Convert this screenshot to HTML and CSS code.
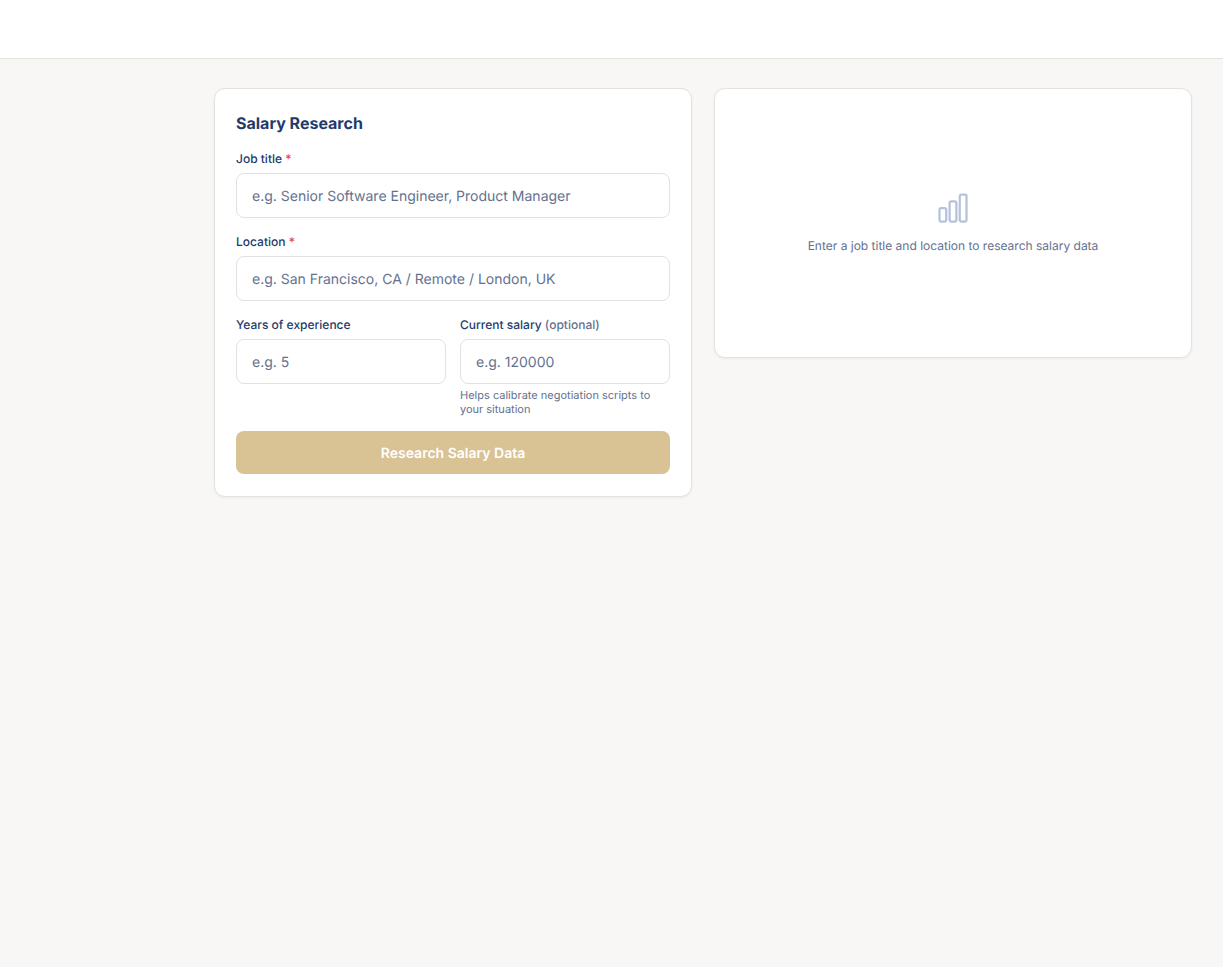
FILE: index.html
```html
<!DOCTYPE html>
<html lang="en">
<head>
    <meta charset="UTF-8">
    <meta name="viewport" content="width=device-width, initial-scale=1.0">
    <title>Salary Research</title>
    <link rel="stylesheet" href="styles.css">
</head>
<body>
    <header class="topbar"></header>
    <main class="content">
        <form class="card research-form">
            <h2>Salary Research</h2>
            <div class="field">
                <label for="job-title">Job title <span class="required">*</span></label>
                <input type="text" id="job-title" placeholder="e.g. Senior Software Engineer, Product Manager">
            </div>
            <div class="field">
                <label for="location">Location <span class="required">*</span></label>
                <input type="text" id="location" placeholder="e.g. San Francisco, CA / Remote / London, UK">
            </div>
            <div class="field-row">
                <div class="field">
                    <label for="experience">Years of experience</label>
                    <input type="number" id="experience" placeholder="e.g. 5" min="0">
                </div>
                <div class="field">
                    <label for="salary">Current salary <span class="optional">(optional)</span></label>
                    <input type="number" id="salary" placeholder="e.g. 120000" min="0">
                    <p class="hint">Helps calibrate negotiation scripts to your situation</p>
                </div>
            </div>
            <button type="submit" class="btn" disabled>Research Salary Data</button>
        </form>
        <section class="card empty">
            <svg class="empty-icon" viewBox="0 0 24 24" fill="none" stroke="currentColor" stroke-width="1.5" stroke-linecap="round" stroke-linejoin="round" aria-hidden="true">
                <path d="M3 13.125C3 12.504 3.504 12 4.125 12h2.25c.621 0 1.125.504 1.125 1.125v6.75C7.5 20.496 6.996 21 6.375 21h-2.25A1.125 1.125 0 013 19.875v-6.75zM9.75 8.625c0-.621.504-1.125 1.125-1.125h2.25c.621 0 1.125.504 1.125 1.125v11.25c0 .621-.504 1.125-1.125 1.125h-2.25a1.125 1.125 0 01-1.125-1.125V8.625zM16.5 4.125c0-.621.504-1.125 1.125-1.125h2.25C20.496 3 21 3.504 21 4.125v15.75c0 .621-.504 1.125-1.125 1.125h-2.25a1.125 1.125 0 01-1.125-1.125V4.125z"/>
            </svg>
            <p>Enter a job title and location to research salary data</p>
        </section>
    </main>
</body>
</html>
```
FILE: styles.css
```css
* {
    box-sizing: border-box;
}
body {
    font-family: Inter, sans-serif;
    text-rendering: geometricPrecision;
    background: #f8f7f5;
    color: #1f3a6b;
    margin: 0;
    min-height: 100vh;
}
.topbar {
    height: 59px;
    background: #ffffff;
    border-bottom: 1px solid #e4e2dc;
}
.content {
    display: grid;
    grid-template-columns: 1fr 1fr;
    gap: 22px;
    align-items: start;
    padding: 29px 31px 30px 214px;
}
.card {
    background: #ffffff;
    border: 1px solid #e4e2dc;
    border-radius: 11px;
    padding: 22px 21px;
    box-shadow: 0 1px 3px rgba(0, 0, 0, 0.05);
}
.research-form {
    display: flex;
    flex-direction: column;
    gap: 14px;
}
h2 {
    margin: 0;
    font-size: 16px;
    line-height: 24px;
    font-weight: 700;
}
.field {
    min-width: 0;
}
.field-row {
    display: grid;
    grid-template-columns: 1fr 1fr;
    gap: 14px;
}
label {
    display: block;
    margin-bottom: 4px;
    font-size: 12px;
    line-height: 20px;
    font-weight: 500;
}
.required {
    color: #ef4444;
}
.optional {
    color: #64718f;
}
input {
    display: block;
    width: 100%;
    height: 45px;
    padding: 2px 15px 0;
    border: 1px solid #e4e2dc;
    border-radius: 8px;
    background: #ffffff;
    color: inherit;
    font-family: inherit;
    font-size: 14px;
    text-rendering: inherit;
}
input::placeholder {
    color: #64718f;
    opacity: 1;
}
.hint {
    margin: 4px 0 1px;
    font-size: 11px;
    line-height: 14px;
    color: #64718f;
}
.btn {
    height: 43px;
    padding: 2px 15px 0;
    border: none;
    border-radius: 8px;
    background: #d9c294;
    color: #ffffff;
    font-family: inherit;
    font-size: 14px;
    font-weight: 600;
    text-rendering: inherit;
}
.empty {
    display: flex;
    flex-direction: column;
    align-items: center;
    justify-content: center;
    gap: 10px;
    min-height: 270px;
    color: #64718f;
    font-size: 12px;
    line-height: 20px;
    text-align: center;
}
.empty p {
    margin: 0;
}
.empty-icon {
    width: 36px;
    height: 36px;
    color: #b5c2dc;
}
```
